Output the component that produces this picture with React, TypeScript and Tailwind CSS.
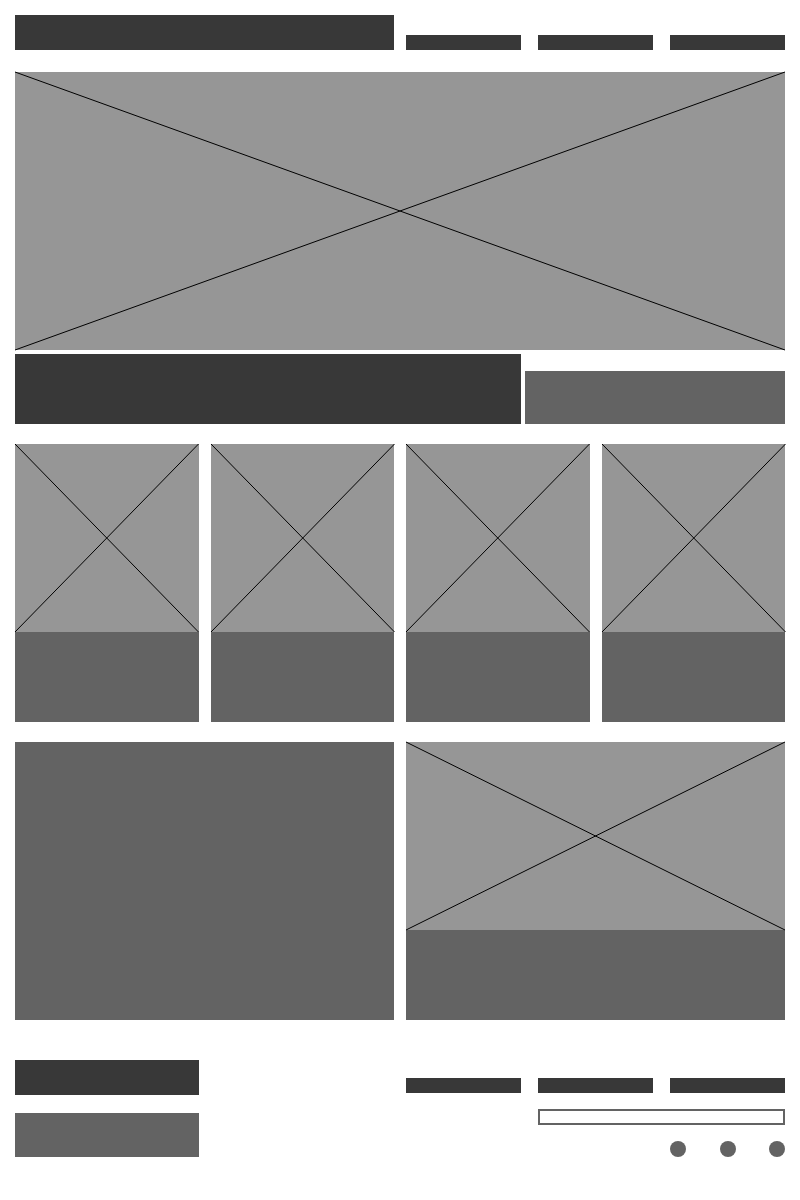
import React from "react";

function CrossBox({ className, label }: { className: string; label: string }) {
  return (
    <svg
      role="img"
      aria-label={label}
      className={`block w-full overflow-visible bg-[#969696] ${className}`}
    >
      <line x1="0" y1="0" x2="100%" y2="100%" stroke="#000" strokeWidth="1" />
      <line x1="0" y1="100%" x2="100%" y2="0" stroke="#000" strokeWidth="1" />
    </svg>
  );
}

const links = ["Products", "About", "Contact"];
const cards = ["First", "Second", "Third", "Fourth"];
const socials = ["Facebook", "Twitter", "Instagram"];

function LinkBars({ label }: { label: string }) {
  return (
    <nav aria-label={label} className="grid grid-cols-3 gap-[17px]">
      {links.map((name) => (
        <a
          key={name}
          href={`#${name.toLowerCase()}`}
          aria-label={name}
          className="block h-[15px] bg-[#383838]"
        />
      ))}
    </nav>
  );
}

export default function App() {
  return (
    <div className="min-h-screen bg-white px-[15px] pt-[15px] pb-[43px]">
      <header className="grid grid-cols-2 items-end gap-3">
        <div className="h-[35px] bg-[#383838]" />
        <LinkBars label="Main" />
      </header>

      <main>
        <section className="pt-[22px]">
          <CrossBox className="h-[278px]" label="Banner" />
          <div className="mt-1 grid grid-cols-[506fr_260fr] items-end gap-1">
            <div className="h-[70px] bg-[#383838]" />
            <div className="h-[53px] bg-[#636363]" />
          </div>
        </section>

        <section className="mt-5 grid grid-cols-4 gap-3">
          {cards.map((name) => (
            <article key={name}>
              <CrossBox className="h-[188px]" label={name} />
              <div className="h-[90px] bg-[#636363]" />
            </article>
          ))}
        </section>

        <section className="mt-5 grid grid-cols-2 gap-3">
          <div className="bg-[#636363]" />
          <article>
            <CrossBox className="h-[188px]" label="Feature" />
            <div className="h-[90px] bg-[#636363]" />
          </article>
        </section>
      </main>

      <footer className="mt-10 grid grid-cols-4 gap-3">
        <div className="flex flex-col gap-[18px]">
          <div className="h-[35px] bg-[#383838]" />
          <div className="h-11 bg-[#636363]" />
        </div>
        <div className="col-span-2 col-start-3 flex flex-col gap-4 pt-[18px]">
          <LinkBars label="Footer" />
          <div className="grid grid-cols-3 gap-x-[17px] gap-y-4">
            <input
              type="text"
              aria-label="Email"
              className="col-span-2 col-start-2 h-4 w-full min-w-0 border-2 border-[#636363] bg-white px-1 text-xs outline-none"
            />
            <div className="col-start-3 flex justify-between">
              {socials.map((name) => (
                <a
                  key={name}
                  href={`#${name.toLowerCase()}`}
                  aria-label={name}
                  className="block size-4 rounded-full bg-[#636363]"
                />
              ))}
            </div>
          </div>
        </div>
      </footer>
    </div>
  );
}
